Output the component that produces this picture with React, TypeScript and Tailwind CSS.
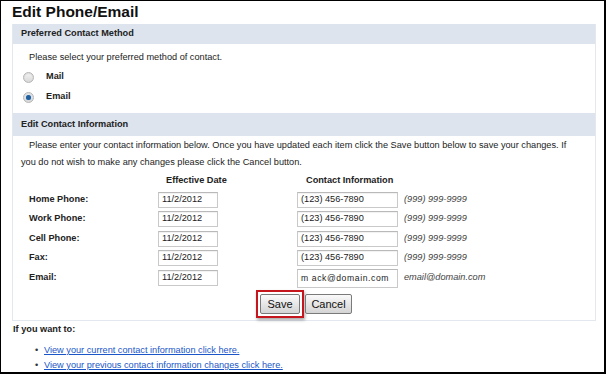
import React from "react";

const rows = [
  { label: "Home Phone:", value: "(123) 456-7890", hint: "(999) 999-9999" },
  { label: "Work Phone:", value: "(123) 456-7890", hint: "(999) 999-9999" },
  { label: "Cell Phone:", value: "(123) 456-7890", hint: "(999) 999-9999" },
  { label: "Fax:", value: "(123) 456-7890", hint: "(999) 999-9999" },
];

function Radio({ checked }: { checked?: boolean }) {
  return (
    <span className="w-[11px] h-[11px] rounded-full border border-[#b5b5b5] bg-gradient-to-b from-[#f4f4f4] to-[#d8d8d8] flex items-center justify-center shadow-[inset_0_1px_1px_rgba(0,0,0,0.1)]">
      {checked && <span className="w-[5px] h-[5px] rounded-full bg-[#1f5f9c] shadow-[0_0_1px_#6aa4dc]" />}
    </span>
  );
}

function Field({ value, w }: { value: string; w: string }) {
  return (
    <div className={`${w} h-[16px] border border-[#c9c9c9] border-t-[#b9b9b9] bg-white flex items-center pl-[3px] whitespace-nowrap text-[9.2px] text-[#222] shadow-[inset_0_1px_1px_rgba(0,0,0,0.06)]`}>
      {value}
    </div>
  );
}

export default function App() {
  return (
    <div
      className="w-[606px] h-[374px] border-t border-l border-r-2 border-b-2 border-black bg-white text-[#222] overflow-hidden"
      style={{ fontFamily: '"Liberation Sans", Arial, sans-serif' }}
    >
      <div className="h-[23px] pl-[11px] pt-[1px] text-[15.5px] font-bold leading-[20px] text-[#111]">Edit Phone/Email</div>
      <div className="ml-[11px] w-[584px] border-r border-b border-l border-[#e3e7ee]">
        <div className="h-[20px] bg-[#dde4ee] flex items-center pl-[8px] text-[9.2px] font-bold">Preferred Contact Method</div>
        <div className="h-[69px] pt-[7px] text-[9.2px]">
          <div className="pl-[16px] leading-[12px]">Please select your preferred method of contact.</div>
          <div className="flex items-center h-[20px] mt-[4px] pl-[10px]">
            <Radio />
            <span className="ml-[12px] font-bold">Mail</span>
          </div>
          <div className="flex items-center h-[20px] pl-[10px]">
            <Radio checked />
            <span className="ml-[12px] font-bold">Email</span>
          </div>
        </div>
        <div className="h-[23px] bg-[#dde4ee] flex items-center pl-[8px] text-[9.2px] font-bold">Edit Contact Information</div>
        <div className="text-[9.2px]">
          <div className="pl-[8px] pt-[1px] leading-[16.5px] whitespace-nowrap">
            <span className="pl-[8px]">
              Please enter your contact information below. Once you have updated each item click the Save button below to save your changes. If
            </span>
            <br />
            you do not wish to make any changes please click the Cancel button.
          </div>
          <div className="grid grid-cols-[129px_139px_106px_1fr] pl-[16px] mt-[2px]">
            <div className="h-[18px]" />
            <div className="h-[18px] flex items-center pl-[8px] font-bold">Effective Date</div>
            <div className="h-[18px] flex items-center pl-[9px] font-bold">Contact Information</div>
            <div className="h-[18px]" />
            {rows.map((r) => (
              <React.Fragment key={r.label}>
                <div className="h-[19.5px] flex items-center font-bold">{r.label}</div>
                <div className="h-[19.5px] flex items-center"><Field value="11/2/2012" w="w-[60px]" /></div>
                <div className="h-[19.5px] flex items-center"><Field value={r.value} w="w-[101px]" /></div>
                <div className="h-[19.5px] flex items-center pl-[1px] italic text-[#444] whitespace-nowrap">{r.hint}</div>
              </React.Fragment>
            ))}
            <div className="h-[20px] flex items-center font-bold">Email:</div>
            <div className="h-[20px] flex items-center"><Field value="11/2/2012" w="w-[60px]" /></div>
            <div className="h-[20px] flex items-center">
              <div className="w-[101px] h-[19px] border border-[#c9c9c9] border-t-[#b9b9b9] bg-white flex items-center pl-[3px] whitespace-nowrap overflow-hidden text-[8.6px] tracking-[0.6px] text-[#222]">m ack@domain.com</div>
            </div>
            <div className="h-[20px] flex items-center pl-[1px] italic text-[#444] whitespace-nowrap">email@domain.com</div>
          </div>
          <div className="flex justify-center items-center h-[32px]">
            <div className="flex items-center">
              <div className="border-2 border-[#c4161c] p-[2px] shadow-[1px_2px_3px_rgba(0,0,0,0.35)]">
                <button className="w-[40px] h-[20px] border border-[#7a7a7a] rounded-[2px] bg-gradient-to-b from-[#fafafa] to-[#d4d4d4] text-[11px] text-[#111] leading-none">Save</button>
              </div>
              <button className="ml-[1px] w-[47px] h-[20px] border border-[#7a7a7a] rounded-[2px] bg-gradient-to-b from-[#fafafa] to-[#d4d4d4] text-[11px] text-[#111] leading-none">Cancel</button>
            </div>
          </div>
        </div>
      </div>
      <div className="pl-[12px] pt-[2px] text-[9.2px] font-bold leading-[12px]">If you want to:</div>
      <ul className="pl-[34px] pt-[8px] text-[9.2px] leading-[15px]">
        <li className="flex"><span className="w-[9px] text-[#333]">•</span><span className="text-[#1a56c8] underline">View your current contact information click here.</span></li>
        <li className="flex"><span className="w-[9px] text-[#333]">•</span><span className="text-[#1a56c8] underline">View your previous contact information changes click here.</span></li>
      </ul>
    </div>
  );
}
